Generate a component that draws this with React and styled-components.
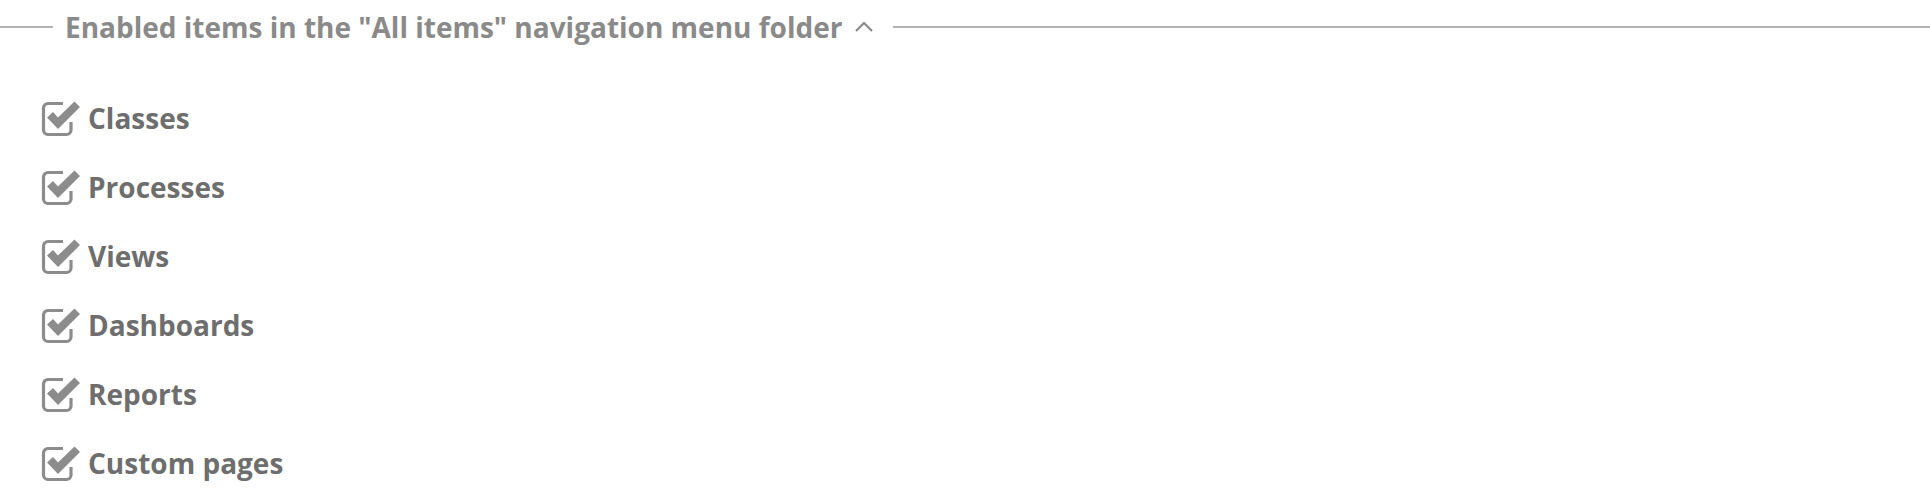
import React from 'react';
import styled, { createGlobalStyle } from 'styled-components';

const GlobalStyle = createGlobalStyle`
  body {
    margin: 0;
    background: #fff;
    font-family: "Open Sans", "Liberation Sans", sans-serif;
  }
`

const Section = styled.section`
  width: 1930px;
  height: 495px;
  overflow: hidden;
`

const Legend = styled.div`
  display: flex;
  align-items: center;
  height: 54px;
`

const Rule = styled.span`
  height: 2px;
  background: #b3b3b3;
  width: ${p => p.width ? p.width + 'px' : 'auto'};
  flex: ${p => p.width ? 'none' : '1'};
`

const LegendTitle = styled.span`
  margin-left: 12px;
  color: #8a8a8a;
  font-size: 28px;
  font-weight: 700;
  font-stretch: 88%;
  white-space: nowrap;
  line-height: 1;
`

const Toggle = styled.svg`
  width: 20px;
  height: 12px;
  margin: 0 19px 0 12px;
`

const List = styled.ul`
  list-style: none;
  margin: 0;
  padding: 44px 0 0 41px;
  display: flex;
  flex-direction: column;
  gap: 29px;
`

const Item = styled.li`
  display: flex;
  align-items: center;
  height: 40px;
  color: #6e6e6e;
  font-size: 28px;
  font-weight: 700;
  font-stretch: 88%;
`

const Box = styled.svg`
  width: 40px;
  height: 38px;
  margin-right: 7px;
  flex: none;
`

const CheckIcon = () => (
  <Box viewBox="0 0 40 38">
    <path d="M22 4.5 H7 a4.5 4.5 0 0 0 -4.5 4.5 V31 a4.5 4.5 0 0 0 4.5 4.5 H25.5 a4.5 4.5 0 0 0 4.5 -4.5 V23" fill="none" stroke="#8c8c8c" strokeWidth="3.2" />
    <path d="M6 18.5 L12 13 L17 18.5 L33.5 2.5 L39 8 L17 30 Z" fill="#8c8c8c" />
  </Box>
)

const items = ['Classes', 'Processes', 'Views', 'Dashboards', 'Reports', 'Custom pages'];

export default function App() {
  return (
    <Section>
      <GlobalStyle />
      <Legend>
        <Rule width={53} />
        <LegendTitle>Enabled items in the "All items" navigation menu folder</LegendTitle>
        <Toggle viewBox="0 0 20 12">
          <path d="M2 10 L10 2 L18 10" fill="none" stroke="#8a8a8a" strokeWidth="2.2" />
        </Toggle>
        <Rule />
      </Legend>
      <List>
        {items.map(item => (
          <Item key={item}>
            <CheckIcon />
            {item}
          </Item>
        ))}
      </List>
    </Section>
  );
}
